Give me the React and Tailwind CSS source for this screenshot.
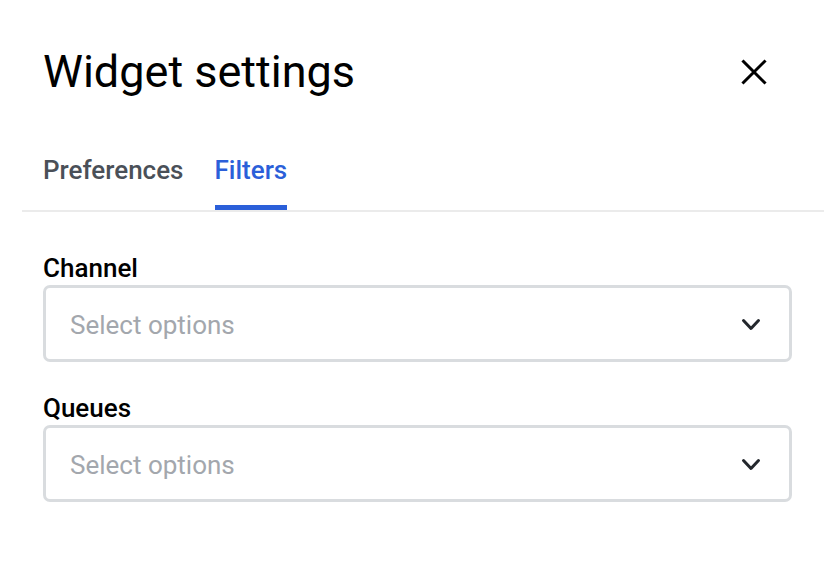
function ChevronIcon() {
  return (
    <svg width="20" height="14" viewBox="0 0 20 14" fill="none" className="mt-[3px] text-[#23272c]">
      <polyline points="2.5,2.5 10,10.5 17.5,2.5" stroke="currentColor" strokeWidth="3" strokeLinecap="round" strokeLinejoin="round" />
    </svg>
  );
}

function CloseIcon() {
  return (
    <svg width="26" height="26" viewBox="0 0 26 26" fill="none" className="text-black">
      <path d="M2.5 2.5 23.5 23.5 M23.5 2.5 2.5 23.5" stroke="currentColor" strokeWidth="3" strokeLinecap="square" />
    </svg>
  );
}

function SelectField({ label }) {
  return (
    <div className="flex flex-col">
      <label className="text-[26px] font-medium leading-[30px] text-black">{label}</label>
      <div className="mt-[2px] flex h-[77px] items-center justify-between rounded-[7px] border-[3px] border-[#d9dcdf] bg-white pl-[24px] pr-[28px]">
        <span className="pt-[3px] text-[26px] text-[#a3a7ad]">Select options</span>
        <ChevronIcon />
      </div>
    </div>
  );
}

export default function App() {
  const tabs = ["Preferences", "Filters"];
  const active = "Filters";

  return (
    <div className="min-h-[564px] w-[824px] bg-white pl-[22px] font-['Roboto',sans-serif]">
      <div className="flex items-center justify-between pl-[21px] pr-[57px] pt-[44px]">
        <h1 className="text-[45px] font-normal leading-[56px] text-black">Widget settings</h1>
        <CloseIcon />
      </div>

      <div className="mt-[55px] flex gap-[31px] border-b-2 border-[#ebebeb] pl-[21px]">
        {tabs.map((tab) => (
          <button
            key={tab}
            className={`border-b-[5px] pb-[21px] pt-[1px] text-[26px] font-medium leading-[28px] ${
              tab === active ? "border-[#2b5fd9] text-[#2b5fd9]" : "border-transparent text-[#4a5058]"
            }`}
          >
            {tab}
          </button>
        ))}
      </div>

      <div className="flex flex-col gap-[31px] pl-[21px] pr-[32px] pt-[41px]">
        <SelectField label="Channel" />
        <SelectField label="Queues" />
      </div>
    </div>
  );
}
